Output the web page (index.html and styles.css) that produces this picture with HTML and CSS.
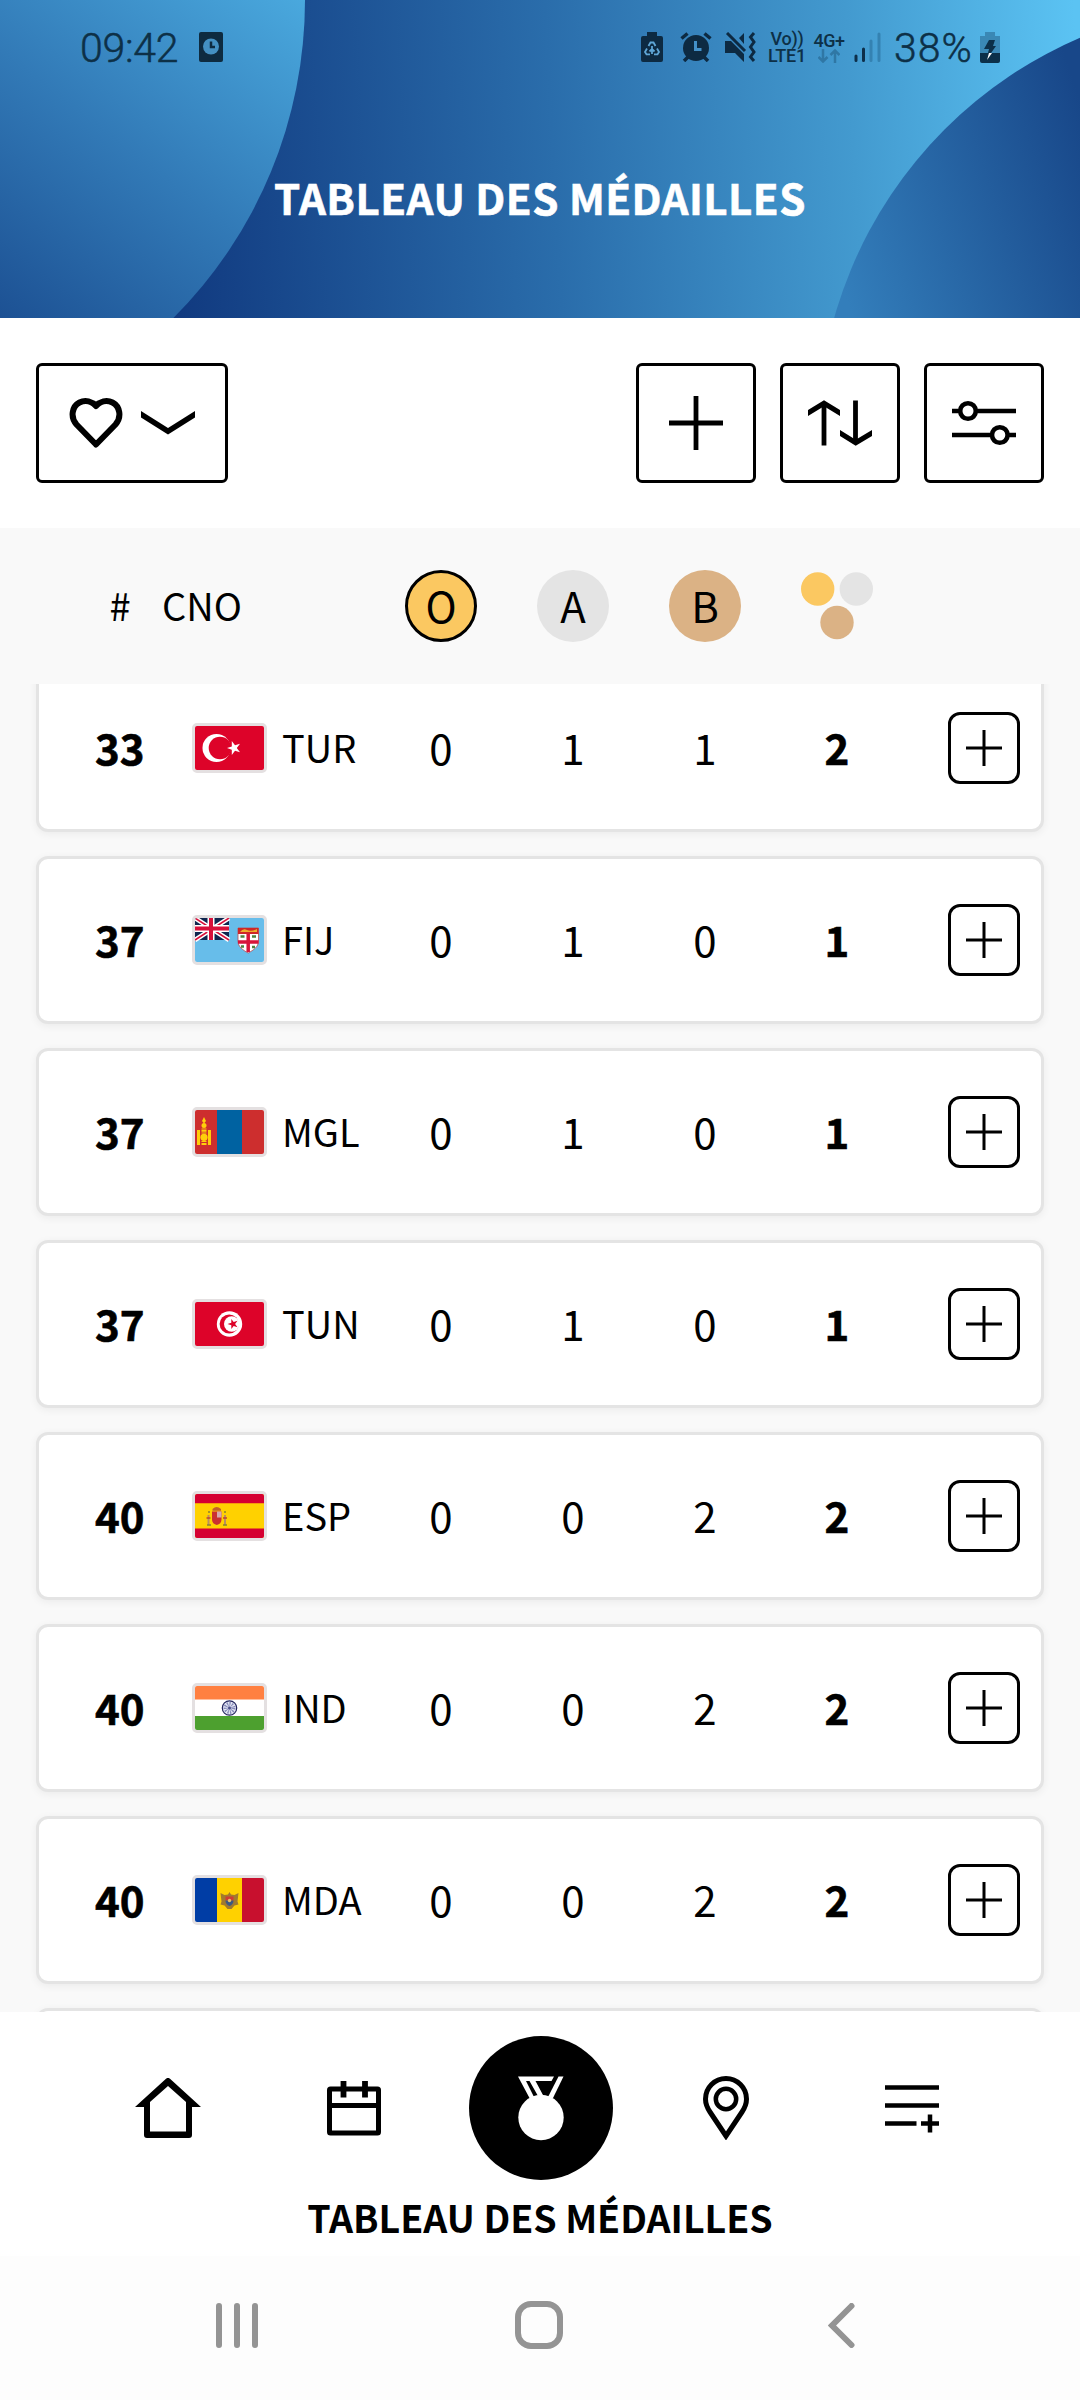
FILE: index.html
```html
<!DOCTYPE html>
<html lang="fr">
<head>
    <meta charset="UTF-8">
    <title>Tableau des médailles</title>
    <link rel="stylesheet" href="styles.css">
</head>
<body>
    <svg class="defs" width="0" height="0">
        <symbol id="plus" viewBox="0 0 36 36"><path d="M18 0v36M0 18h36" stroke="#000" stroke-width="3" fill="none"/></symbol>
    </svg>

    <header class="header">
        <svg class="header-bg" width="1080" height="318" viewBox="0 0 1080 318">
            <defs>
                <linearGradient id="bg-main" gradientUnits="userSpaceOnUse" x1="170" y1="160" x2="1080" y2="110">
                    <stop offset="0" stop-color="#113a80"/>
                    <stop offset="0.42" stop-color="#2a6dab"/>
                    <stop offset="0.75" stop-color="#439acf"/>
                    <stop offset="1" stop-color="#5bc3f3"/>
                </linearGradient>
                <linearGradient id="bg-left" gradientUnits="userSpaceOnUse" x1="-10" y1="330" x2="270" y2="-30">
                    <stop offset="0" stop-color="#1b4e91"/>
                    <stop offset="0.5" stop-color="#327ab7"/>
                    <stop offset="1" stop-color="#4aa9de"/>
                </linearGradient>
                <linearGradient id="bg-right" gradientUnits="userSpaceOnUse" x1="830" y1="250" x2="1100" y2="160">
                    <stop offset="0" stop-color="#337ebb"/>
                    <stop offset="1" stop-color="#184789"/>
                </linearGradient>
            </defs>
            <rect width="1080" height="318" fill="url(#bg-main)"/>
            <circle cx="-145" cy="0" r="450" fill="url(#bg-left)"/>
            <circle cx="1250" cy="435" r="432" fill="url(#bg-right)"/>
        </svg>

        <div class="status-bar">
            <div class="status-left">
                <span class="clock">09:42</span>
                <svg width="24" height="30" viewBox="0 0 24 30">
                    <rect width="24" height="30" rx="2" fill="#0e2b40"/>
                    <circle cx="12" cy="14.500" r="8" fill="#4490c2"/>
                    <path d="M12 9.500v5.500h4" stroke="#0e2b40" stroke-width="2.500" fill="none"/>
                </svg>
            </div>
            <div class="status-right">
                <svg class="st-saver" width="22" height="30" viewBox="0 0 22 30">
                    <path d="M6 0h10v4h4a2 2 0 0 1 2 2v22a2 2 0 0 1-2 2H2a2 2 0 0 1-2-2V6a2 2 0 0 1 2-2h4z" fill="#0d2a42"/>
                    <path d="M7.500 14l2-3.500h3l2 3.500M16 16.500l2 3.500-1.500 2.300h-3.500M9 22.300H5.500L4 20l2-3.500M11 14v8M8.500 19.500l2.500-2.500 2.500 2.500" fill="none" stroke="#5fa6d6" stroke-width="1.800"/>
                </svg>
                <svg class="st-alarm" width="32" height="30" viewBox="0 0 32 30">
                    <path d="M1.500 6.500l6-5M30.500 6.500l-6-5M4 29l5-5M28 29l-5-5" stroke="#0d2a42" stroke-width="3.500"/>
                    <circle cx="16" cy="16" r="13" fill="#0d2a42"/>
                    <path d="M15.500 9v8.500h6" stroke="#4390c8" stroke-width="3" fill="none"/>
                </svg>
                <svg class="st-mute" width="31" height="30" viewBox="0 0 31 30">
                    <path d="M0 9h6l13 13v8l-9-9H0zM14 6l5-5v11z" fill="#0d2a42"/>
                    <path d="M2 1l18 18" stroke="#0d2a42" stroke-width="3"/>
                    <path d="M29 1l-3.500 4 3.500 5-3.500 5 3.500 5-3.500 5 3.500 4" stroke="#0d2a42" stroke-width="3" fill="none"/>
                </svg>
                <div class="st-volte"><span>Vo))</span><span>LTE1</span></div>
                <div class="st-4g">
                    <span>4G+</span>
                    <svg width="22" height="14" viewBox="0 0 22 14"><path d="M5 0v12M0.500 8L5 12.500 9.500 8M17 14V2M12.500 6L17 1.500 21.500 6" stroke="#2f77a5" stroke-width="2.500" fill="none"/></svg>
                </div>
                <svg class="st-signal" width="27" height="30" viewBox="0 0 27 30">
                    <path d="M2 24v4.500M9.500 17v11.500" stroke="#0d2f4a" stroke-width="3" stroke-linecap="round"/>
                    <path d="M17 9v19.500M25 2v26.500" stroke="#3482b2" stroke-width="3" stroke-linecap="round"/>
                </svg>
                <span class="percent">38%</span>
                <svg class="st-battery" width="20" height="31" viewBox="0 0 20 31">
                    <path d="M5 0h10v4h5v17H0V4h5z" fill="#3a88b5"/>
                    <path d="M0 21h20v8a2 2 0 0 1-2 2H2a2 2 0 0 1-2-2z" fill="#0c3049"/>
                    <path d="M9 8h6l-2 6h3l-5 7H8l1-4H4z" fill="#0c3049"/>
                    <path d="M9 21h3l-5 7z" fill="#fff"/>
                </svg>
            </div>
        </div>
        <h1 class="title">TABLEAU DES MÉDAILLES</h1>
    </header>

    <div class="toolbar">
        <div class="tool tool-wide">
            <svg width="54" height="50" viewBox="0 0 54 50"><path d="M27 46.500L7.500 26.500C1 19 3 8.500 10.500 4.500c6-3 12.500-1 16.500 3.500 4-4.500 10.500-6.500 16.500-3.500 7.500 4 9.500 14.500 3 22z" fill="none" stroke="#000" stroke-width="6" stroke-linejoin="round"/></svg>
            <svg width="54" height="24" viewBox="0 0 54 24"><path d="M0 0l27 17L54 0v6.500L27 23.500 0 6.500z"/></svg>
        </div>
        <div class="tool-group">
            <div class="tool">
                <svg width="54" height="54" viewBox="0 0 54 54"><path d="M27 0v54M0 27h54" stroke="#000" stroke-width="4.800"/></svg>
            </div>
            <div class="tool">
                <svg width="64" height="46" viewBox="0 0 64 46">
                    <path d="M16 2.500V45.500M47.500 0.500v43" stroke="#000" stroke-width="4.800"/>
                    <path d="M0 10L16 0.200 32 10v6L16 6.200 0 16zM32 30l15.700 9.800L64 30v6l-16.300 9.800L32 36z"/>
                </svg>
            </div>
            <div class="tool">
                <svg width="64" height="46" viewBox="0 0 64 46">
                    <path d="M0 11h8M24 11h40M0 35h40M56 35h8" stroke="#000" stroke-width="4.500"/>
                    <circle cx="16" cy="11" r="7.800" fill="none" stroke="#000" stroke-width="4.600"/>
                    <circle cx="47.800" cy="35" r="7.800" fill="none" stroke="#000" stroke-width="4.600"/>
                </svg>
            </div>
        </div>
    </div>

    <div class="table-head">
        <span class="th-rank">#</span>
        <span class="th-cno">CNO</span>
        <div class="th-medal"><span class="medal gold">O</span></div>
        <div class="th-medal"><span class="medal silver">A</span></div>
        <div class="th-medal"><span class="medal bronze">B</span></div>
        <div class="th-medal">
            <svg width="72" height="68" viewBox="0 0 72 68">
                <circle cx="16.700" cy="17" r="16.700" fill="#fbc861"/>
                <circle cx="55.300" cy="17" r="16.700" fill="#e4e4e4"/>
                <circle cx="36" cy="50.500" r="16.700" fill="#dbb285"/>
            </svg>
        </div>
    </div>

    <main class="list">
        <div class="row">
            <span class="rank">33</span>
            <svg class="flag" viewBox="0 0 69 44">
                <rect width="69" height="44" fill="#dd0329"/>
                <circle cx="21.500" cy="22" r="14" fill="#fff"/>
                <circle cx="25" cy="22" r="11.300" fill="#dd0329"/>
                <path d="M32 22l4.800-1.600V15l3.200 4.300 5-1.500-3.200 4.200 3.200 4.300-5-1.600-3.200 4.300v-5.300z" fill="#fff"/>
            </svg>
            <span class="code">TUR</span>
            <span class="num">0</span><span class="num">1</span><span class="num">1</span><span class="num total">2</span>
            <div class="add"><svg width="36" height="36"><use href="#plus"/></svg></div>
        </div>
        <div class="row">
            <span class="rank">37</span>
            <svg class="flag" viewBox="0 0 69 44">
                <rect width="69" height="44" fill="#67bdea"/>
                <rect width="34" height="22" fill="#10264f"/>
                <path d="M0 0l34 22M34 0L0 22" stroke="#fff" stroke-width="4.500"/>
                <path d="M0 0l34 22M34 0L0 22" stroke="#d8103a" stroke-width="1.500"/>
                <path d="M16 0v22M0 10.500h34" stroke="#fff" stroke-width="7"/>
                <path d="M16 0v22M0 10.500h34" stroke="#d8103a" stroke-width="4"/>
                <path d="M43 10h20.500v13c0 6-5 9-10.300 12C48 32 43 29 43 23z" fill="#fff" stroke="#b94a50" stroke-width="0.800"/>
                <path d="M43 10h20.500v6H43z" fill="#cf2627"/>
                <path d="M45 14q3-4 7-2t10-1v3z" fill="#efad2b"/>
                <path d="M53.200 16v18M43 24h20.500" stroke="#d8143a" stroke-width="3.500"/>
                <path d="M45.500 18.500h4M57 18.500h4M46 28.500h3M57 29h3" stroke="#4f8240" stroke-width="2.500"/>
            </svg>
            <span class="code">FIJ</span>
            <span class="num">0</span><span class="num">1</span><span class="num">0</span><span class="num total">1</span>
            <div class="add"><svg width="36" height="36"><use href="#plus"/></svg></div>
        </div>
        <div class="row">
            <span class="rank">37</span>
            <svg class="flag" viewBox="0 0 69 44">
                <rect width="69" height="44" fill="#cd2e2e"/>
                <rect x="22" width="25" height="44" fill="#0062a1"/>
                <path d="M2 20h3v15H2zM13 20h3v15h-3zM6.500 20h5v1.800h-5zM6.500 33h5v2h-5zM9 7l2 4-2 2.500L7 11z" fill="#ffcf0a"/>
                <circle cx="9" cy="15.500" r="2.500" fill="#ffcf0a"/>
                <circle cx="9" cy="27.300" r="3.600" fill="#ffcf0a"/>
                <path d="M6.500 19h5M6.500 23h5M6.500 31.500h5" stroke="#ffcf0a" stroke-width="1"/>
            </svg>
            <span class="code">MGL</span>
            <span class="num">0</span><span class="num">1</span><span class="num">0</span><span class="num total">1</span>
            <div class="add"><svg width="36" height="36"><use href="#plus"/></svg></div>
        </div>
        <div class="row">
            <span class="rank">37</span>
            <svg class="flag" viewBox="0 0 69 44">
                <rect width="69" height="44" fill="#dd0329"/>
                <circle cx="34.500" cy="22" r="12.700" fill="#fff"/>
                <circle cx="34.200" cy="22" r="9.600" fill="#dd0329"/>
                <circle cx="36.700" cy="22" r="7.700" fill="#fff"/>
                <path d="M32.500 22l3.800-1.300V17l2.400 3 3.800-1.200-2.400 3.200 2.400 3.300-3.800-1.200-2.400 3v-3.800z" fill="#dd0329"/>
            </svg>
            <span class="code">TUN</span>
            <span class="num">0</span><span class="num">1</span><span class="num">0</span><span class="num total">1</span>
            <div class="add"><svg width="36" height="36"><use href="#plus"/></svg></div>
        </div>
        <div class="row">
            <span class="rank">40</span>
            <svg class="flag" viewBox="0 0 69 44">
                <rect width="69" height="44" fill="#ffd100"/>
                <path d="M0 0h69v9.300H0zM0 34.500h69V44H0z" fill="#d50032"/>
                <path d="M17 17.500h9.500v8c0 3-2 5-4.700 5.500-2.800-.5-4.800-2.500-4.800-5.500z" fill="#cb3030"/>
                <path d="M22 17.500h4.500v6H22z" fill="#d6a7ad"/>
                <path d="M17.500 15q4-4 8.500 0v1.800h-8.500z" fill="#c3602a"/>
                <path d="M13.500 21v10M30 21v10" stroke="#b98f62" stroke-width="2"/>
                <path d="M11.500 24h4M28 24h4" stroke="#c04330" stroke-width="1.500"/>
                <path d="M12 31h4M28 31h4M13 18h2M29 18h2" stroke="#8a8130" stroke-width="1.500"/>
            </svg>
            <span class="code">ESP</span>
            <span class="num">0</span><span class="num">0</span><span class="num">2</span><span class="num total">2</span>
            <div class="add"><svg width="36" height="36"><use href="#plus"/></svg></div>
        </div>
        <div class="row">
            <span class="rank">40</span>
            <svg class="flag" viewBox="0 0 69 44">
                <rect width="69" height="44" fill="#fff"/>
                <rect width="69" height="13.500" fill="#ff8041"/>
                <rect y="30" width="69" height="14" fill="#4da02f"/>
                <circle cx="34.500" cy="22" r="7.200" fill="#e6e8f5" stroke="#24265f" stroke-width="1.200"/>
                <circle cx="34.500" cy="22" r="3.500" fill="none" stroke="#868bba" stroke-width="5" stroke-dasharray="1 1"/>
                <circle cx="34.500" cy="22" r="1.500" fill="#4a4e8c"/>
            </svg>
            <span class="code">IND</span>
            <span class="num">0</span><span class="num">0</span><span class="num">2</span><span class="num total">2</span>
            <div class="add"><svg width="36" height="36"><use href="#plus"/></svg></div>
        </div>
        <div class="row">
            <span class="rank">40</span>
            <svg class="flag" viewBox="0 0 69 44">
                <rect width="22" height="44" fill="#003da5"/>
                <rect x="22" width="25" height="44" fill="#ffd100"/>
                <rect x="47" width="22" height="44" fill="#c8102e"/>
                <path d="M25.500 15l4 2 3.500-.5 1.500-2.500 1.500 2.500 3.500.5 4-2-1 8.500 1 3-4 1-3 3.500h-4l-3-3.500-4-1 1-3z" fill="#a17a2d"/>
                <path d="M30.500 18.500h8v4h-8z" fill="#cf3c33"/>
                <path d="M30.500 22.500h8c0 3-1.500 4.500-4 5.500-2.500-1-4-2.500-4-5.500z" fill="#3c5982"/>
                <circle cx="34.500" cy="22.500" r="1.700" fill="#e9c26a"/>
            </svg>
            <span class="code">MDA</span>
            <span class="num">0</span><span class="num">0</span><span class="num">2</span><span class="num total">2</span>
            <div class="add"><svg width="36" height="36"><use href="#plus"/></svg></div>
        </div>
        <div class="row"></div>
    </main>

    <nav class="tabs">
        <div class="tab-icons">
            <div class="tab">
                <svg width="66" height="60" viewBox="0 0 66 60">
                    <path d="M33 0c1 0 1.500.3 2 .8L66 29h-9v28a3 3 0 0 1-3 3H12a3 3 0 0 1-3-3V29H0L31 .8c.5-.5 1-.8 2-.8zM33 8L15 24v29.500h36V24z" fill-rule="evenodd"/>
                </svg>
            </div>
            <div class="tab">
                <svg width="54" height="55" viewBox="0 0 54 55">
                    <rect x="2.500" y="8" width="49" height="44" rx="1" fill="none" stroke="#000" stroke-width="5"/>
                    <path d="M2 24.500h50" stroke="#000" stroke-width="5"/>
                    <path d="M16.500 0v16.500M38 0v16.500" stroke="#000" stroke-width="5.800"/>
                </svg>
            </div>
            <div class="tab active">
                <svg width="48" height="65" viewBox="0 0 48 65">
                    <circle cx="24" cy="41.500" r="22.700" fill="#fff"/>
                    <path d="M1 0.500h36l-2.500 4.500H18.500l8 15h-5.500L12.500 5H9l8.500 17h-5z" fill="#fff"/>
                    <path d="M41.500 0.500h5L36 22h-5.500z" fill="#fff"/>
                </svg>
            </div>
            <div class="tab">
                <svg width="46" height="64" viewBox="0 0 46 64">
                    <path d="M23 60L7 36C4 31.500 2.500 28 2.500 23a20.500 20.500 0 0 1 41 0c0 5-1.500 8.500-4.500 13z" fill="none" stroke="#000" stroke-width="5"/>
                    <circle cx="23" cy="23" r="10.200" fill="none" stroke="#000" stroke-width="4.500"/>
                </svg>
            </div>
            <div class="tab">
                <svg width="54" height="50" viewBox="0 0 54 50">
                    <path d="M0 4.500h54M0 22.500h54M0 40.500h31.500M36 40.500h18M45 31.500v18" stroke="#000" stroke-width="4.500"/>
                </svg>
            </div>
        </div>
        <div class="tab-label">TABLEAU DES MÉDAILLES</div>
    </nav>

    <div class="system-nav">
        <svg width="42" height="45" viewBox="0 0 42 45"><path d="M3 3v39M21 3v39M39 3v39" stroke="#949494" stroke-width="6" stroke-linecap="round"/></svg>
        <svg class="nav-home" width="48" height="48" viewBox="0 0 48 48"><rect x="3" y="3" width="42" height="42" rx="13" fill="none" stroke="#949494" stroke-width="6"/></svg>
        <svg width="27" height="45" viewBox="0 0 27 45"><path d="M23.500 3L4 22.500 23.500 42" fill="none" stroke="#949494" stroke-width="6" stroke-linecap="round"/></svg>
    </div>
</body>
</html>
```

FILE: styles.css
```css
* {
    box-sizing: border-box;
}

body {
    display: flex;
    flex-direction: column;
    width: 1080px;
    height: 2400px;
    margin: 0;
    background-color: #fff;
    color: #000;
    font-family: 'Noto Sans CJK JP', 'Noto Sans', sans-serif;
    line-height: 1;
    overflow: hidden;
}

svg {
    display: block;
    flex-shrink: 0;
}

.defs {
    position: absolute;
}

/* header */
.header {
    position: relative;
    height: 318px;
    flex-shrink: 0;
}

.header-bg {
    position: absolute;
    top: 0;
    left: 0;
    z-index: -1;
}

.status-bar {
    display: flex;
    justify-content: space-between;
    align-items: center;
    height: 94px;
    padding: 0 80px;
    color: #0d3047;
    font-family: Roboto, sans-serif;
}

.status-left,
.status-right {
    display: flex;
    align-items: center;
}

.clock,
.percent {
    font-size: 41px;
    font-weight: 300;
    padding-top: 3px;
    -webkit-text-stroke: 0.5px #0d3047;
}

.clock {
    width: 119px;
    letter-spacing: -0.3px;
}

.percent {
    width: 99px;
    padding-left: 13px;
    letter-spacing: 1px;
}

.st-alarm {
    margin-left: 17px;
}

.st-mute {
    margin-left: 13px;
}

.st-volte,
.st-4g {
    display: flex;
    flex-direction: column;
    align-items: center;
    font-size: 18px;
    font-weight: 500;
    line-height: 17px;
}

.st-volte {
    width: 38px;
    margin-left: 12px;
    letter-spacing: -0.2px;
}

.st-4g {
    width: 30px;
    margin: 0 10px 0 8px;
    letter-spacing: -0.5px;
}

.title {
    margin: 0;
    font-size: 42px;
    line-height: 205px;
    font-weight: 700;
    color: #fff;
    text-align: center;
    letter-spacing: 0.5px;
    -webkit-text-stroke: 0.6px #fff;
}

/* toolbar */
.toolbar {
    display: flex;
    justify-content: space-between;
    align-items: center;
    height: 210px;
    padding: 0 36px;
    flex-shrink: 0;
}

.tool-group {
    display: flex;
    gap: 24px;
}

.tool {
    display: flex;
    justify-content: center;
    align-items: center;
    width: 120px;
    height: 120px;
    border: 3px solid #000;
    border-radius: 6px;
}

.tool-wide {
    width: 192px;
    gap: 18px;
}

/* table */
.table-head {
    display: flex;
    align-items: center;
    height: 156px;
    padding-left: 96px;
    background-color: #f9f9f9;
    font-size: 38px;
    flex-shrink: 0;
}

.th-rank {
    width: 48px;
    padding-bottom: 2px;
    text-align: center;
}

.th-cno {
    width: 231px;
    padding: 0 0 2px 18px;
}

.th-medal {
    display: flex;
    justify-content: center;
    width: 132px;
}

.medal {
    width: 72px;
    height: 72px;
    border-radius: 50%;
    font-size: 42px;
    line-height: 69px;
    text-align: center;
}

.gold {
    background-color: #fbc861;
    border: 3px solid #000;
    line-height: 63px;
}

.silver {
    background-color: #e4e4e4;
}

.bronze {
    background-color: #dbb285;
}

.list {
    display: flex;
    flex-direction: column;
    justify-content: flex-start;
    gap: 24px;
    height: 1328px;
    padding: 0 36px;
    background-color: #f9f9f9;
    overflow: hidden;
    flex-shrink: 0;
}

.row {
    display: flex;
    align-items: center;
    height: 168px;
    padding: 0 21px 0 56px;
    background-color: #fff;
    border: 3px solid #e4e4e4;
    border-radius: 12px;
    box-shadow: 0 2px 9px rgba(0, 0, 0, 0.06);
    flex-shrink: 0;
}

/* the list is scrolled a little under the table head */
.row:first-child {
    margin-top: -20px;
}

.rank,
.code,
.num {
    padding-bottom: 3px;
}

.rank {
    width: 48px;
    font-size: 42px;
    font-weight: 700;
    text-align: center;
    -webkit-text-stroke: 0.6px #000;
}

.flag {
    width: 75px;
    height: 50px;
    margin-left: 49px;
    border: 3px solid #e4e0e1;
    border-radius: 5px;
}

.code {
    width: 108px;
    padding-left: 15px;
    font-size: 38px;
}

.num {
    width: 132px;
    font-size: 42px;
    text-align: center;
}

.total {
    font-weight: 700;
    -webkit-text-stroke: 0.6px #000;
}

.add {
    display: flex;
    justify-content: center;
    align-items: center;
    width: 72px;
    height: 72px;
    margin-left: auto;
    border: 3px solid #000;
    border-radius: 12px;
}

/* bottom navigation */
.tabs {
    height: 244px;
    padding-top: 24px;
    background-color: #fff;
    flex-shrink: 0;
}

.tab-icons {
    display: flex;
    justify-content: space-between;
    padding: 0 96px;
}

.tab {
    display: flex;
    justify-content: center;
    align-items: center;
    width: 144px;
    height: 144px;
}

.active {
    margin: 0 -1px 0 1px;
    background-color: #000;
    border-radius: 50%;
}

.tab-label {
    margin-top: 18px;
    font-size: 37.5px;
    font-weight: 700;
    text-align: center;
}

.system-nav {
    display: flex;
    justify-content: space-between;
    align-items: center;
    height: 144px;
    padding: 0 225px 6px 216px;
    background-color: #fdfdfd;
}

.nav-home {
    margin-right: 8px;
}
```
